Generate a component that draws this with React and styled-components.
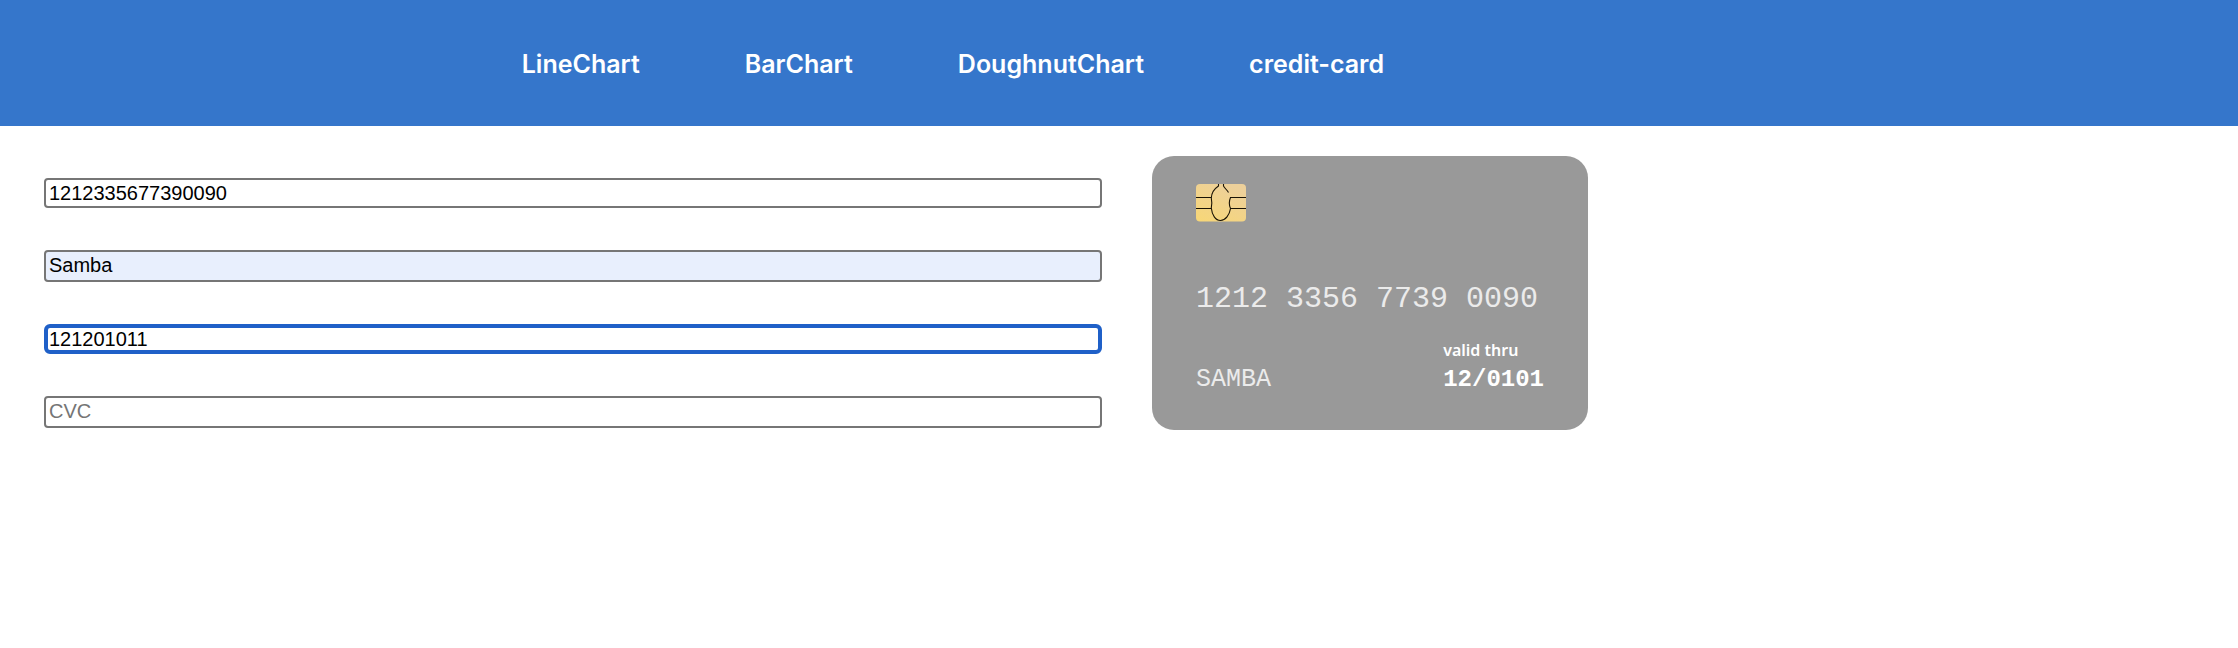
import React, { useState } from "react";
import styled, { createGlobalStyle } from "styled-components";

const GlobalStyle = createGlobalStyle`
  *, *::before, *::after { box-sizing: border-box; }
  body {
    margin: 0;
    background: #fff;
    color: #000;
    font-family: Inter, "Liberation Sans", sans-serif;
  }
`;

const Header = styled.header`
  background: #3576cb;
  padding: 48px 23% 46px;
`;

const Nav = styled.nav`
  display: flex;
  gap: 105px;
  padding-left: 7px;
`;

const NavLink = styled.a`
  color: #fff;
  font-size: 25px;
  line-height: 32px;
  font-weight: 600;
  text-decoration: none;
  white-space: nowrap;
`;

const Main = styled.main`
  display: grid;
  grid-template-columns: 1fr 1fr;
  column-gap: 50px;
  align-items: start;
  padding: 30px 28px 0 44px;
`;

const Form = styled.form`
  display: flex;
  flex-direction: column;
  gap: 42px;
  padding-top: 22px;
`;

const Field = styled.input`
  width: 100%;
  height: ${(p) => (p.$tall ? 32 : 30)}px;
  margin: 0;
  padding: 0 ${(p) => (p.$active ? 1 : 3)}px ${(p) => (p.$tall ? 2 : 0)}px;
  border: ${(p) => (p.$active ? "4px solid #1f60c8" : "2px solid #767676")};
  border-radius: ${(p) => (p.$active ? 6 : 4)}px;
  background: ${(p) => (p.$filled ? "#e8effd" : "#fff")};
  color: #000;
  font-family: "Liberation Sans", Arial, sans-serif;
  font-size: 20px;
  line-height: 22px;
  outline: none;

  &::placeholder {
    color: #757575;
    opacity: 1;
  }
`;

const Card = styled.section`
  display: flex;
  flex-direction: column;
  width: 436px;
  max-width: 100%;
  min-height: 274px;
  padding: 28px 44px 36px;
  border-radius: 22px;
  background: #999;
  color: #fff;
  font-family: "Liberation Mono", "Courier New", monospace;
`;

const Chip = styled.svg`
  display: block;
  width: 50px;
  height: 38px;
`;

const CardNumber = styled.div`
  margin-top: 60px;
  font-size: 30px;
  line-height: 34px;
  color: #ebebeb;
  white-space: nowrap;
`;

const CardFooter = styled.div`
  display: flex;
  justify-content: space-between;
  align-items: flex-end;
  margin-top: auto;
`;

const CardName = styled.div`
  font-size: 25px;
  line-height: 28px;
  color: #ebebeb;
  text-transform: uppercase;
`;

const Expiry = styled.div`
  display: flex;
  flex-direction: column;
  font-size: 24px;
  line-height: 28px;
  font-weight: 700;
`;

const ExpiryLabel = styled.span`
  font-family: "Noto Sans", "Open Sans", sans-serif;
  font-size: 16px;
  font-weight: 600;
  line-height: 32px;
`;

const LINKS = ["LineChart", "BarChart", "DoughnutChart", "credit-card"];

const FIELDS = [
  { name: "number", label: "Card Number" },
  { name: "name", label: "Name", tall: true, filled: true },
  { name: "expiry", label: "Expiry", active: true },
  { name: "cvc", label: "CVC", tall: true },
];

const groupNumber = (value) => (value.match(/.{1,4}/g) || []).join(" ");
const formatExpiry = (value) => `${value.slice(0, 2)}/${value.slice(4, 8)}`;

export default function App() {
  const [values, setValues] = useState({
    number: "1212335677390090",
    name: "Samba",
    expiry: "121201011",
    cvc: "",
  });

  const handleChange = (event) => {
    const { name, value } = event.target;
    setValues((current) => ({ ...current, [name]: value }));
  };

  return (
    <>
      <GlobalStyle />
      <Header>
        <Nav>
          {LINKS.map((link) => (
            <NavLink key={link} href={`#${link}`}>
              {link}
            </NavLink>
          ))}
        </Nav>
      </Header>
      <Main>
        <Form>
          {FIELDS.map((field) => (
            <Field
              key={field.name}
              name={field.name}
              aria-label={field.label}
              placeholder={field.label}
              value={values[field.name]}
              onChange={handleChange}
              $tall={field.tall}
              $filled={field.filled}
              $active={field.active}
            />
          ))}
        </Form>
        <Card>
          <Chip viewBox="0 0 50 38" aria-hidden="true">
            <defs>
              <linearGradient id="chip" x1="0" y1="1" x2="0.6" y2="0">
                <stop offset="0" stopColor="#f8d776" />
                <stop offset="1" stopColor="#edd09a" />
              </linearGradient>
            </defs>
            <rect width="50" height="37.5" rx="4" fill="url(#chip)" />
            <path
              d="M22.5 0V2C18 5 15.5 9.500 15.300 14C16.200 18 16 20 15.300 24C16 31 19.500 36.500 24.500 36.500C29.500 36.500 33.500 31 34.500 24.500C33 21 33 17 34.500 13.500H50M27.500 0V2C29 4.500 31 6 32.500 8.500M0 13.500H15.300M0 24.500H15.300M34.500 24.500H50"
              fill="none"
              stroke="#1a1305"
              strokeWidth="1.1"
            />
          </Chip>
          <CardNumber>{groupNumber(values.number)}</CardNumber>
          <CardFooter>
            <CardName>{values.name}</CardName>
            <Expiry>
              <ExpiryLabel>valid thru</ExpiryLabel>
              {formatExpiry(values.expiry)}
            </Expiry>
          </CardFooter>
        </Card>
      </Main>
    </>
  );
}
